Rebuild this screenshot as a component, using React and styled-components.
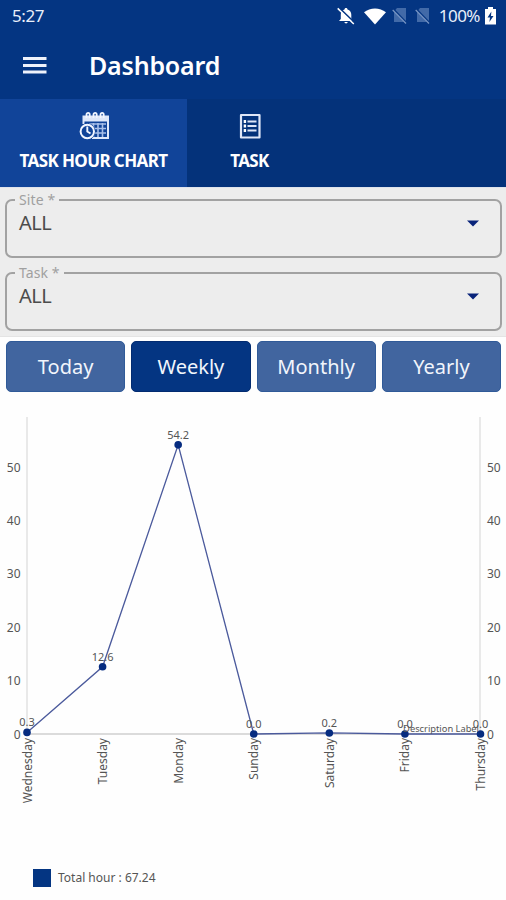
import React from "react";
import styled, { createGlobalStyle } from "styled-components";

const GlobalStyle = createGlobalStyle`
  * {
    box-sizing: border-box;
  }
  body {
    margin: 0;
    background: #fff;
    font-family: "Noto Sans", "Open Sans", sans-serif;
  }
`;

const Screen = styled.div`
  display: flex;
  flex-direction: column;
  width: 506px;
  height: 900px;
  overflow: hidden;
  background: #fefefe;
`;

const StatusBar = styled.div`
  display: flex;
  align-items: center;
  justify-content: space-between;
  height: 31px;
  padding: 0 10px 0 12px;
  background: #043582;
  color: #e9effa;
  font-size: 17px;
  line-height: 31px;
`;

const Clock = styled.span`
  letter-spacing: -0.45px;
`;

const StatusIcons = styled.div`
  display: flex;
  align-items: center;
`;

const Battery = styled.span`
  margin: 0 5px 0 8px;
  letter-spacing: -0.5px;
`;

const Header = styled.header`
  display: flex;
  align-items: center;
  height: 68px;
  padding: 0 0 0 23px;
  background: #043582;
  color: #fff;
`;

const Title = styled.h1`
  margin: 0 0 0 42px;
  font-size: 25px;
  font-weight: 600;
  line-height: 34px;
  letter-spacing: -0.2px;
`;

const Tabs = styled.nav`
  display: flex;
  height: 88px;
  background: #04327a;
`;

const Tab = styled.div`
  display: flex;
  flex-direction: column;
  align-items: center;
  width: ${(props) => props.$width}px;
  padding-top: 12px;
  background: ${(props) => (props.$active ? "#114499" : "transparent")};
  color: #fff;
`;

const TabLabel = styled.span`
  margin-top: 8px;
  font-size: 17px;
  font-weight: 700;
  line-height: 24px;
  letter-spacing: ${(props) => props.$spacing}px;
  white-space: nowrap;
`;

const Filters = styled.section`
  display: flex;
  flex-direction: column;
  gap: 6px;
  height: 150px;
  padding: 3px 4px 0 5px;
  background: #ededed;
  border-top: 1px solid #dfe3ec;
  border-bottom: 1px solid #e4e4e4;
`;

const Field = styled.fieldset`
  display: flex;
  align-items: center;
  justify-content: space-between;
  height: 67px;
  min-width: 0;
  margin: 0;
  padding: 0 21px 8px 12px;
  border: 2px solid #a2a2a2;
  border-radius: 7px;
  color: #4c4c4c;
  font-size: 20px;
`;

const FieldLabel = styled.legend`
  margin-left: -4px;
  padding: 0 4px;
  color: #a0a0a0;
  font-size: 14px;
  line-height: 18px;
  letter-spacing: 0.1px;
`;

const FieldValue = styled.span`
  line-height: 28px;
  letter-spacing: -0.5px;
`;

const Ranges = styled.div`
  display: grid;
  grid-template-columns: repeat(4, 1fr);
  gap: 6px;
  padding: 4px 5px 0 6px;
`;

const RangeButton = styled.button`
  height: 51px;
  padding: 0 0 1px;
  border: 1px solid ${(props) => (props.$active ? "#022b70" : "#305a98")};
  border-radius: 5px;
  background: ${(props) => (props.$active ? "#043582" : "#41659f")};
  color: #f1f5fc;
  font-family: inherit;
  font-size: 20px;
`;

const ChartArea = styled.section`
  flex: 1;
`;

const ChartSvg = styled.svg`
  display: block;
  font-family: "Noto Sans", sans-serif;
  fill: #555;
`;

const Legend = styled.div`
  display: flex;
  align-items: center;
  gap: 7px;
  margin-top: 47px;
  padding-left: 33px;
  color: #555;
  font-size: 12px;
  line-height: 18px;
`;

const Swatch = styled.span`
  width: 18px;
  height: 18px;
  background: #043582;
`;

const MenuIcon = () => (
  <svg width="24" height="20" viewBox="0 0 24 20" fill="#eef2fb">
    <path d="M0 2h23.500v3H0zM0 9h23.500v3H0zM0 15.500h23.500v3H0z" />
  </svg>
);

const BellOffIcon = () => (
  <svg width="19" height="18" viewBox="0 0 19 18">
    <path
      d="M9 1c-1 0-1.500.7-1.500 1.500C4.800 3.200 3.800 5.300 3.800 7.700v4.200L2 14h14l-1.700-2.100V7.700c0-2.400-1.200-4.500-3.800-5.200C10.500 1.700 10 1 9 1zM7.300 15a1.800 1.800 0 0 0 3.500 0z"
      fill="#fff"
    />
    <path d="M2.200.8 18 16" stroke="#043582" strokeWidth="1.700" />
    <path d="M.7 1.400 16.800 17" stroke="#fff" strokeWidth="1.500" />
  </svg>
);

const WifiIcon = () => (
  <svg width="22" height="18" viewBox="0 0 22 18">
    <path d="M0 5.200C6.200.1 15.800.1 22 5.200L11 17.500z" fill="#fff" />
  </svg>
);

const NoSimIcon = () => (
  <svg width="16" height="17" viewBox="0 0 16 17">
    <path d="M2 4.500 5 1h9v14H2z" fill="#426aa8" />
    <path d="M1.500 2.500 14.500 16" stroke="#043582" strokeWidth="2" />
    <path d="M.7 3 14 16.500" stroke="#7895c4" strokeWidth="1.200" />
  </svg>
);

const BatteryIcon = () => (
  <svg width="11" height="18" viewBox="0 0 11 18">
    <path d="M3 0h5v2h3v15.500H0V2h3z" fill="#fff" />
    <path d="M6.400 4.500 2.500 10.500H5l-.6 4.500 4.100-6H6z" fill="#043582" />
  </svg>
);

const CalendarClockIcon = () => (
  <svg width="34" height="30" viewBox="0 0 34 30" fill="none">
    <path
      d="M6.500 13V5.500h24.500V27H15"
      stroke="#dfe8fa"
      strokeWidth="2"
    />
    <path d="M6 5h25v5.500H6z" fill="#dfe8fa" />
    <path
      d="M9.500 7V3.500a1.600 1.600 0 0 1 3.200 0V7M16.500 7V3.500a1.600 1.600 0 0 1 3.200 0V7M23.500 7V3.500a1.600 1.600 0 0 1 3.200 0V7"
      stroke="#f2f6ff"
      strokeWidth="1.800"
    />
    <path
      d="M12 13h17M15 17.500h14M17 22h12M16.500 12v14M21 12v14M25.500 12v14"
      stroke="#a8bfe9"
      strokeWidth="1.600"
    />
    <circle cx="10.300" cy="20.500" r="8.200" fill="#114499" />
    <circle cx="10.300" cy="20.500" r="6.700" stroke="#f2f6ff" strokeWidth="2" />
    <path d="M10.300 15.500v5l3.200 2" stroke="#f2f6ff" strokeWidth="1.900" />
  </svg>
);

const TaskIcon = () => (
  <svg width="24" height="30" viewBox="0 0 24 30" fill="none">
    <path
      d="M3 4h18.500v22.500H3z"
      stroke="#dfe6f7"
      strokeWidth="2.200"
      strokeLinejoin="round"
    />
    <path
      d="M9.500 10.500h9M9.500 15h9M9.500 19.500h9"
      stroke="#dfe6f7"
      strokeWidth="1.900"
    />
    <path
      d="M5.700 10.500h2.400M5.700 15h2.400M5.700 19.500h2.400"
      stroke="#fff"
      strokeWidth="2.800"
    />
  </svg>
);

const Caret = () => (
  <svg width="12" height="7" viewBox="0 0 12 7">
    <path d="M0 .5h12L6 6.500z" fill="#08237a" />
  </svg>
);

const AXIS_LEFT = 27;
const AXIS_RIGHT = 480.5;
const BASELINE = 342;
const UNIT = 5.335;

const points = [
  { day: "Wednesday", value: 0.3 },
  { day: "Tuesday", value: 12.6 },
  { day: "Monday", value: 54.2 },
  { day: "Sunday", value: 0.0 },
  { day: "Saturday", value: 0.2 },
  { day: "Friday", value: 0.0 },
  { day: "Thursday", value: 0.0 },
].map((p, i, all) => ({
  ...p,
  x: AXIS_LEFT + (i * (AXIS_RIGHT - AXIS_LEFT)) / (all.length - 1),
  y: BASELINE - p.value * UNIT,
}));

const ticks = [0, 10, 20, 30, 40, 50];

const HourChart = () => (
  <ChartSvg width="506" height="430" viewBox="0 0 506 430">
    <path
      d={`M${AXIS_LEFT} 25V${BASELINE}M${AXIS_RIGHT - 0.5} 25V${BASELINE}`}
      stroke="#e9e9e9"
      strokeWidth="2"
    />
    <path
      d={`M${AXIS_LEFT} ${BASELINE}H${AXIS_RIGHT}`}
      stroke="#cfcfcf"
      strokeWidth="1.500"
    />
    {ticks.map((t) => (
      <React.Fragment key={t}>
        <text
          x="20.500"
          y={BASELINE - t * UNIT + 4.5}
          fontSize="12"
          textAnchor="end"
        >
          {t}
        </text>
        <text x="487" y={BASELINE - t * UNIT + 4.5} fontSize="12">
          {t}
        </text>
      </React.Fragment>
    ))}
    {points.map((p) => (
      <text
        key={p.day}
        transform={`translate(${p.x + 4.5} 346) rotate(-90)`}
        fontSize="12"
        textAnchor="end"
      >
        {p.day}
      </text>
    ))}
    <polyline
      points={points.map((p) => `${p.x},${p.y}`).join(" ")}
      fill="none"
      stroke="#4b5a9c"
      strokeWidth="1.300"
    />
    {points.map((p) => (
      <text
        key={p.day}
        x={p.x}
        y={p.y - 6}
        fontSize="11"
        textAnchor="middle"
      >
        {p.value.toFixed(1)}
      </text>
    ))}
    {points.map((p) => (
      <circle key={p.day} cx={p.x} cy={p.y} r="3.800" fill="#062c80" />
    ))}
    <text x="479" y="339.500" fontSize="9.300" textAnchor="end">
      Description Label
    </text>
  </ChartSvg>
);

const SelectField = ({ label }) => (
  <Field>
    <FieldLabel>{label} *</FieldLabel>
    <FieldValue>ALL</FieldValue>
    <Caret />
  </Field>
);

const ranges = ["Today", "Weekly", "Monthly", "Yearly"];

const App = () => {
  return (
    <Screen>
      <GlobalStyle />
      <StatusBar>
        <Clock>5:27</Clock>
        <StatusIcons>
          <BellOffIcon />
          <svg width="8" height="1" />
          <WifiIcon />
          <svg width="6" height="1" />
          <NoSimIcon />
          <svg width="7" height="1" />
          <NoSimIcon />
          <Battery>100%</Battery>
          <BatteryIcon />
        </StatusIcons>
      </StatusBar>
      <Header>
        <MenuIcon />
        <Title>Dashboard</Title>
      </Header>
      <Tabs>
        <Tab $active $width={187}>
          <CalendarClockIcon />
          <TabLabel $spacing={-0.6}>TASK HOUR CHART</TabLabel>
        </Tab>
        <Tab $width={125}>
          <TaskIcon />
          <TabLabel $spacing={-0.6}>TASK</TabLabel>
        </Tab>
      </Tabs>
      <Filters>
        <SelectField label="Site" />
        <SelectField label="Task" />
      </Filters>
      <Ranges>
        {ranges.map((r) => (
          <RangeButton key={r} $active={r === "Weekly"}>
            {r}
          </RangeButton>
        ))}
      </Ranges>
      <ChartArea>
        <HourChart />
        <Legend>
          <Swatch />
          <span>Total hour : 67.24</span>
        </Legend>
      </ChartArea>
    </Screen>
  );
};

export default App;
